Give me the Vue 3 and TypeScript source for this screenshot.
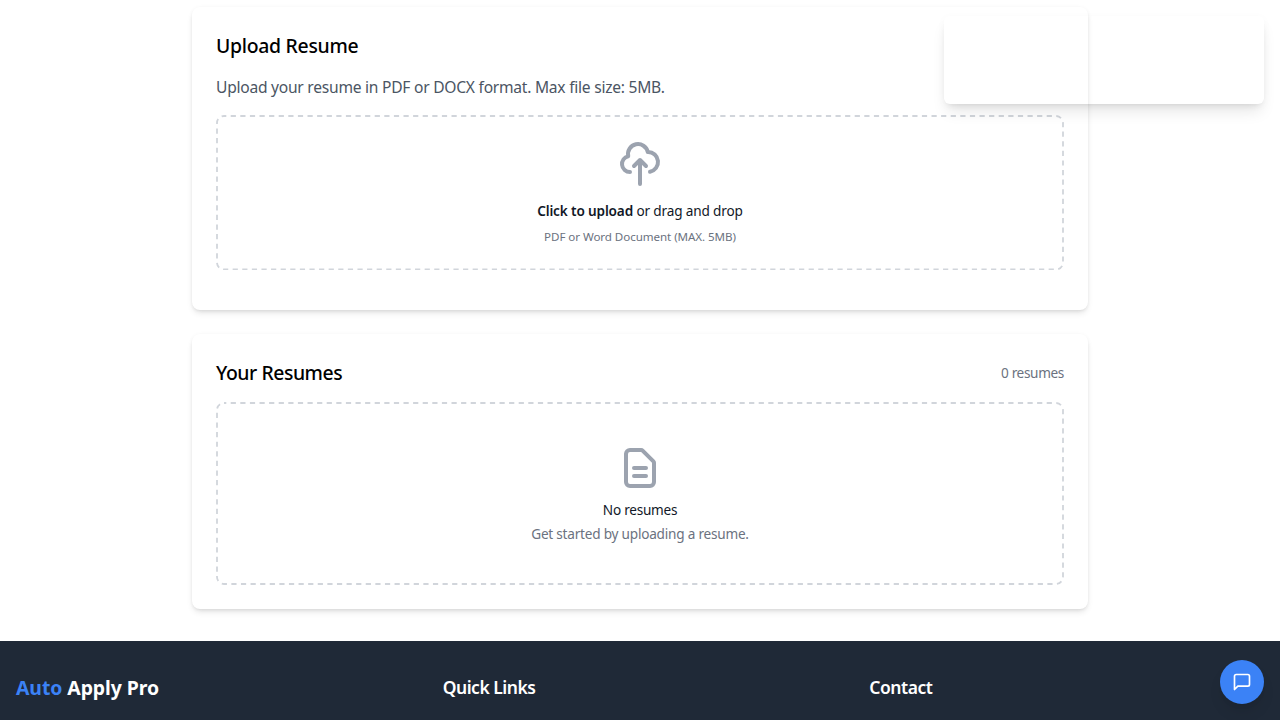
<script setup lang="ts">
const resumeCount: number = 0
const footerColumns: string[] = ['Quick Links', 'Contact']
</script>

<template>
  <div class="page">
    <main class="content">
      <section class="card upload-card">
        <h2 class="title upload-title">Upload Resume</h2>
        <p class="lead">Upload your resume in PDF or DOCX format. Max file size: 5MB.</p>
        <label class="zone upload-zone">
          <svg class="outline"><rect x="1" y="1" width="846" height="153.5" rx="7" /></svg>
          <svg class="icon" viewBox="0 0 24 24">
            <path d="M7 16a4 4 0 01-.88-7.903A5 5 0 1115.9 6L16 6a5 5 0 011 9.9M15 13l-3-3m0 0l-3 3m3-3v12" />
          </svg>
          <p class="prompt"><strong>Click to upload</strong><span> or drag and drop</span></p>
          <p class="hint">PDF or Word Document (MAX. 5MB)</p>
        </label>
      </section>

      <section class="card">
        <div class="card-head">
          <h2 class="title">Your Resumes</h2>
          <span class="count">{{ resumeCount }} resumes</span>
        </div>
        <div class="zone empty-zone">
          <svg class="outline"><rect x="1" y="1" width="846" height="181" rx="7" /></svg>
          <svg class="icon" viewBox="0 0 24 24">
            <path d="M9 12h6m-6 4h6m2 5H7a2 2 0 01-2-2V5a2 2 0 012-2h5.586a1 1 0 01.707.293l5.414 5.414a1 1 0 01.293.707V19a2 2 0 01-2 2z" />
          </svg>
          <h3 class="empty-title">No resumes</h3>
          <p class="empty-text">Get started by uploading a resume.</p>
        </div>
      </section>
    </main>

    <footer class="footer">
      <div class="brand"><span class="brand-accent">Auto</span> Apply Pro</div>
      <h4 v-for="name in footerColumns" :key="name" class="footer-heading">{{ name }}</h4>
    </footer>

    <div class="toast"></div>
    <button class="chat" aria-label="Chat">
      <svg viewBox="0 0 24 24">
        <path d="M21 15a2 2 0 0 1-2 2H7l-4 4V5a2 2 0 0 1 2-2h14a2 2 0 0 1 2 2z" />
      </svg>
    </button>
  </div>
</template>

<style>
body {
  margin: 0;
  background: #fff;
  overflow: hidden;
}
</style>

<style scoped>
.page {
  height: 720px;
  overflow: hidden;
  box-sizing: border-box;
  padding-top: 6.5px;
  display: flex;
  flex-direction: column;
  font-family: "Noto Sans", "Open Sans", sans-serif;
}
h2, h3, h4, p { margin: 0; }
.content {
  width: 896px;
  margin: 0 auto 32px;
  display: flex;
  flex-direction: column;
  gap: 24px;
  flex: none;
}
.card {
  box-sizing: border-box;
  padding: 24px;
  border-radius: 8px;
  background: #fff;
  box-shadow: 0 4px 6px -1px rgba(0, 0, 0, 0.1), 0 2px 4px -2px rgba(0, 0, 0, 0.1), 0 0 4px rgba(0, 0, 0, 0.03);
}
.upload-card {
  height: 303.5px;
}
.title {
  padding-top: 1px;
  font-size: 19.4px;
  line-height: 27px;
  font-weight: 500;
  letter-spacing: -0.44px;
  color: #000;
}
.upload-title { letter-spacing: -0.28px; }
.lead {
  margin: 16px 0;
  font-size: 15.6px;
  line-height: 24px;
  letter-spacing: -0.25px;
  color: #4b5563;
}
.zone {
  position: relative;
  box-sizing: border-box;
  display: flex;
  flex-direction: column;
  align-items: center;
}
.outline {
  position: absolute;
  inset: 0;
  width: 100%;
  height: 100%;
  fill: none;
  stroke: #d1d5db;
  stroke-width: 1.8;
  stroke-dasharray: 5.2 4.4;
  stroke-dashoffset: 2.9;
}
.upload-zone {
  height: 155.5px;
  padding-top: 25.5px;
}
.empty-zone {
  height: 183px;
  margin-top: 16px;
  padding-top: 41.5px;
}
.icon {
  width: 48px;
  height: 48px;
  flex: none;
  fill: none;
  stroke: #9ca3af;
  stroke-width: 2;
  stroke-linecap: round;
  stroke-linejoin: round;
}
.prompt {
  margin-top: 13px;
  font-size: 13.6px;
  line-height: 20px;
  letter-spacing: -0.15px;
  color: #111827;
  white-space: pre;
}
.prompt strong { font-weight: 600; }
.hint {
  margin-top: 8px;
  font-size: 11.6px;
  line-height: 16px;
  letter-spacing: -0.07px;
  color: #6b7280;
}
.card-head {
  display: flex;
  justify-content: space-between;
  align-items: center;
}
.count {
  padding-top: 2px;
  font-size: 13.6px;
  line-height: 20px;
  letter-spacing: -0.35px;
  color: #6b7280;
}
.empty-title {
  margin-top: 8.5px;
  font-size: 13.6px;
  line-height: 20px;
  font-weight: 400;
  letter-spacing: -0.25px;
  color: #111827;
}
.empty-text {
  margin-top: 4px;
  font-size: 13.6px;
  line-height: 20px;
  letter-spacing: -0.22px;
  color: #6b7280;
}
.footer {
  flex: 1;
  display: grid;
  grid-template-columns: repeat(3, 1fr);
  column-gap: 32px;
  padding: 32px 16px 0;
  background: #1f2937;
  color: #fff;
}
.brand {
  padding-top: 1px;
  font-size: 19.4px;
  line-height: 28px;
  font-weight: 700;
  letter-spacing: -0.06px;
}
.brand-accent { color: #3b82f6; }
.footer-heading {
  font-size: 17.5px;
  line-height: 28px;
  font-weight: 600;
  letter-spacing: -0.48px;
}
.toast {
  position: absolute;
  top: 16px;
  right: 16px;
  width: 320px;
  height: 88px;
  border-radius: 6px;
  background: transparent;
  box-shadow: 0 10px 15px -3px rgba(0, 0, 0, 0.1), 0 4px 6px -4px rgba(0, 0, 0, 0.1), 0 2px 10px rgba(0, 0, 0, 0.03);
}
.chat {
  position: absolute;
  right: 16px;
  bottom: 16px;
  width: 44px;
  height: 44px;
  padding: 0;
  display: grid;
  place-items: center;
  border: 0;
  border-radius: 50%;
  background: #3b82f6;
  box-shadow: 0 10px 15px -3px rgba(0, 0, 0, 0.1), 0 4px 6px -4px rgba(0, 0, 0, 0.1);
}
.chat svg {
  width: 20px;
  height: 20px;
  fill: none;
  stroke: #fff;
  stroke-width: 2;
  stroke-linecap: round;
  stroke-linejoin: round;
}
</style>
